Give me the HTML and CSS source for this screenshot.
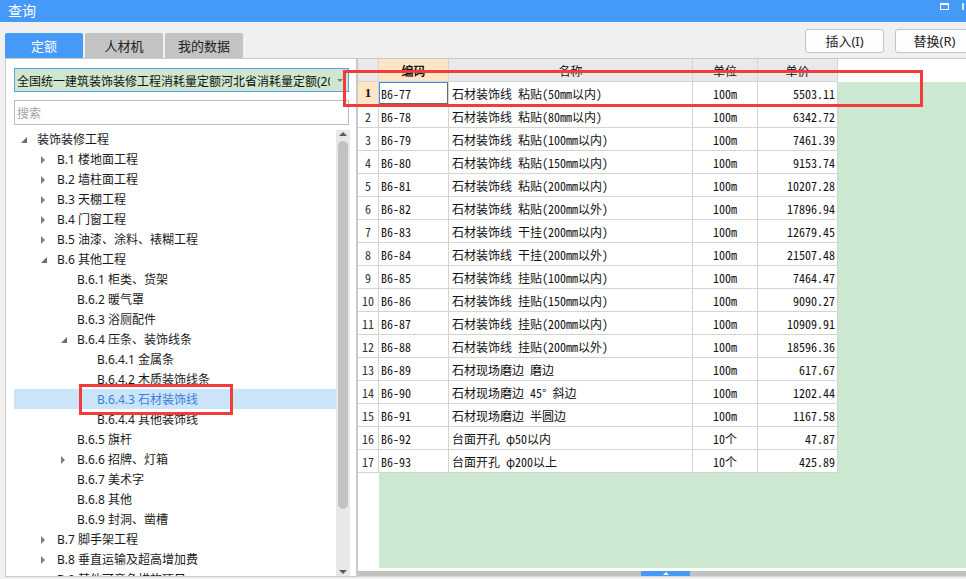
FILE: index.html
```html
<!DOCTYPE html>
<html lang="zh-CN">
<head>
<meta charset="utf-8">
<title>查询</title>
<link rel="stylesheet" href="styles.css">
</head>
<body>
<div class="app">
  <div class="titlebar">
    <span class="title">查询</span>
    <span class="win-max"></span>
    <span class="win-close"></span>
  </div>
  <div class="main">
    <div class="left">
      <div class="tabs">
        <div class="tab active">定额</div>
        <div class="tab">人材机</div>
        <div class="tab">我的数据</div>
      </div>
      <div class="panel">
        <div class="select">
          <span class="select-text">全国统一建筑装饰装修工程消耗量定额河北省消耗量定额(2012)</span>
          <span class="caret"></span>
        </div>
        <div class="search"><span class="placeholder">搜索</span></div>
        <div class="tree-wrap">
          <div class="tree">
            <div class="node l0"><span class="tg"><svg class="ex" width="6" height="6" viewBox="0 0 6 6"><polygon points="6,0 6,6 0,6"/></svg></span><span class="lbl">装饰装修工程</span></div>
            <div class="node l1"><span class="tg"><svg class="co" width="5" height="8" viewBox="0 0 5 8"><polygon points="0,0 4,4 0,8"/></svg></span><span class="lbl">B.1 楼地面工程</span></div>
            <div class="node l1"><span class="tg"><svg class="co" width="5" height="8" viewBox="0 0 5 8"><polygon points="0,0 4,4 0,8"/></svg></span><span class="lbl">B.2 墙柱面工程</span></div>
            <div class="node l1"><span class="tg"><svg class="co" width="5" height="8" viewBox="0 0 5 8"><polygon points="0,0 4,4 0,8"/></svg></span><span class="lbl">B.3 天棚工程</span></div>
            <div class="node l1"><span class="tg"><svg class="co" width="5" height="8" viewBox="0 0 5 8"><polygon points="0,0 4,4 0,8"/></svg></span><span class="lbl">B.4 门窗工程</span></div>
            <div class="node l1"><span class="tg"><svg class="co" width="5" height="8" viewBox="0 0 5 8"><polygon points="0,0 4,4 0,8"/></svg></span><span class="lbl">B.5 油漆、涂料、裱糊工程</span></div>
            <div class="node l1"><span class="tg"><svg class="ex" width="6" height="6" viewBox="0 0 6 6"><polygon points="6,0 6,6 0,6"/></svg></span><span class="lbl">B.6 其他工程</span></div>
            <div class="node l2"><span class="tg"></span><span class="lbl">B.6.1 柜类、货架</span></div>
            <div class="node l2"><span class="tg"></span><span class="lbl">B.6.2 暖气罩</span></div>
            <div class="node l2"><span class="tg"></span><span class="lbl">B.6.3 浴厕配件</span></div>
            <div class="node l2"><span class="tg"><svg class="ex" width="6" height="6" viewBox="0 0 6 6"><polygon points="6,0 6,6 0,6"/></svg></span><span class="lbl">B.6.4 压条、装饰线条</span></div>
            <div class="node l3"><span class="tg"></span><span class="lbl">B.6.4.1 金属条</span></div>
            <div class="node l3"><span class="tg"></span><span class="lbl">B.6.4.2 木质装饰线条</span></div>
            <div class="node l3 selected"><span class="tg"></span><span class="lbl">B.6.4.3 石材装饰线</span></div>
            <div class="node l3"><span class="tg"></span><span class="lbl">B.6.4.4 其他装饰线</span></div>
            <div class="node l2"><span class="tg"></span><span class="lbl">B.6.5 旗杆</span></div>
            <div class="node l2"><span class="tg"><svg class="co" width="5" height="8" viewBox="0 0 5 8"><polygon points="0,0 4,4 0,8"/></svg></span><span class="lbl">B.6.6 招牌、灯箱</span></div>
            <div class="node l2"><span class="tg"></span><span class="lbl">B.6.7 美术字</span></div>
            <div class="node l2"><span class="tg"></span><span class="lbl">B.6.8 其他</span></div>
            <div class="node l2"><span class="tg"></span><span class="lbl">B.6.9 封洞、凿槽</span></div>
            <div class="node l1"><span class="tg"><svg class="co" width="5" height="8" viewBox="0 0 5 8"><polygon points="0,0 4,4 0,8"/></svg></span><span class="lbl">B.7 脚手架工程</span></div>
            <div class="node l1"><span class="tg"><svg class="co" width="5" height="8" viewBox="0 0 5 8"><polygon points="0,0 4,4 0,8"/></svg></span><span class="lbl">B.8 垂直运输及超高增加费</span></div>
            <div class="node l1"><span class="tg"><svg class="co" width="5" height="8" viewBox="0 0 5 8"><polygon points="0,0 4,4 0,8"/></svg></span><span class="lbl">B.9 其他可竞争措施项目</span></div>
          </div>
          <div class="vscroll">
            <span class="arrow-up"></span>
            <span class="thumb"></span>
            <span class="arrow-down"></span>
          </div>
        </div>
      </div>
    </div>
    <div class="right">
      <div class="toolbar">
        <button class="btn">插入(I)</button>
        <button class="btn">替换(R)</button>
      </div>
      <div class="sheet">
        <div class="grid">
          <div class="c h corner"></div><div class="c h sel">编码</div><div class="c h">名称</div><div class="c h">单位</div><div class="c h">单价</div><div class="c eh"></div>

          <div class="c rn sel">1</div><div class="c code focus">B6-77</div><div class="c name">石材装饰线 粘贴(50mm以内)</div><div class="c unit">100m</div><div class="c price">5503.11</div><div class="c e"></div>
          <div class="c rn">2</div><div class="c code">B6-78</div><div class="c name">石材装饰线 粘贴(80mm以内)</div><div class="c unit">100m</div><div class="c price">6342.72</div><div class="c e"></div>
          <div class="c rn">3</div><div class="c code">B6-79</div><div class="c name">石材装饰线 粘贴(100mm以内)</div><div class="c unit">100m</div><div class="c price">7461.39</div><div class="c e"></div>
          <div class="c rn">4</div><div class="c code">B6-80</div><div class="c name">石材装饰线 粘贴(150mm以内)</div><div class="c unit">100m</div><div class="c price">9153.74</div><div class="c e"></div>
          <div class="c rn">5</div><div class="c code">B6-81</div><div class="c name">石材装饰线 粘贴(200mm以内)</div><div class="c unit">100m</div><div class="c price">10207.28</div><div class="c e"></div>
          <div class="c rn">6</div><div class="c code">B6-82</div><div class="c name">石材装饰线 粘贴(200mm以外)</div><div class="c unit">100m</div><div class="c price">17896.94</div><div class="c e"></div>
          <div class="c rn">7</div><div class="c code">B6-83</div><div class="c name">石材装饰线 干挂(200mm以内)</div><div class="c unit">100m</div><div class="c price">12679.45</div><div class="c e"></div>
          <div class="c rn">8</div><div class="c code">B6-84</div><div class="c name">石材装饰线 干挂(200mm以外)</div><div class="c unit">100m</div><div class="c price">21507.48</div><div class="c e"></div>
          <div class="c rn">9</div><div class="c code">B6-85</div><div class="c name">石材装饰线 挂贴(100mm以内)</div><div class="c unit">100m</div><div class="c price">7464.47</div><div class="c e"></div>
          <div class="c rn">10</div><div class="c code">B6-86</div><div class="c name">石材装饰线 挂贴(150mm以内)</div><div class="c unit">100m</div><div class="c price">9090.27</div><div class="c e"></div>
          <div class="c rn">11</div><div class="c code">B6-87</div><div class="c name">石材装饰线 挂贴(200mm以内)</div><div class="c unit">100m</div><div class="c price">10909.91</div><div class="c e"></div>
          <div class="c rn">12</div><div class="c code">B6-88</div><div class="c name">石材装饰线 挂贴(200mm以外)</div><div class="c unit">100m</div><div class="c price">18596.36</div><div class="c e"></div>
          <div class="c rn">13</div><div class="c code">B6-89</div><div class="c name">石材现场磨边 磨边</div><div class="c unit">100m</div><div class="c price">617.67</div><div class="c e"></div>
          <div class="c rn">14</div><div class="c code">B6-90</div><div class="c name">石材现场磨边 45° 斜边</div><div class="c unit">100m</div><div class="c price">1202.44</div><div class="c e"></div>
          <div class="c rn">15</div><div class="c code">B6-91</div><div class="c name">石材现场磨边 半圆边</div><div class="c unit">100m</div><div class="c price">1167.58</div><div class="c e"></div>
          <div class="c rn">16</div><div class="c code">B6-92</div><div class="c name">台面开孔 φ50以内</div><div class="c unit">10个</div><div class="c price">47.87</div><div class="c e"></div>
          <div class="c rn">17</div><div class="c code">B6-93</div><div class="c name">台面开孔 φ200以上</div><div class="c unit">10个</div><div class="c price">425.89</div><div class="c e"></div>
        </div>
        <div class="fill"><div class="fill-gutter"></div><div class="fill-green"></div></div>
        <div class="hscroll"><span class="hthumb"><span class="hthumb-arrow"></span></span></div>
      </div>
    </div>
  </div>
  <div class="mark mark-tree"></div>
  <div class="mark mark-row"></div>
</div>
</body>
</html>
```

FILE: styles.css
```css
* { box-sizing: border-box; }

html, body {
  margin: 0;
  padding: 0;
}

body {
  width: 966px;
  height: 579px;
  overflow: hidden;
  background: #f0f0f0;
  font-family: "Noto Sans", "Noto Sans CJK SC", sans-serif;
  font-size: 12px;
  color: #1a1a1a;
}

.app {
  position: relative;
  width: 966px;
  height: 579px;
  overflow: hidden;
}

/* title bar */
.titlebar {
  height: 22px;
  background: #4599f7;
  color: #fff;
  display: flex;
  align-items: flex-start;
  padding-left: 8px;
}

.title {
  font-size: 14px;
  line-height: 21px;
}

.win-max {
  margin-left: auto;
  margin-top: 3px;
  width: 9px;
  height: 7px;
  border: 1px solid #fff;
  border-top-width: 2px;
}

.win-close {
  margin-left: 13px;
  margin-top: 3px;
  width: 2px;
  height: 7px;
  background: #fff;
  opacity: 0.8;
  margin-right: 2px;
}

/* layout */
.main {
  display: flex;
  height: 557px;
}

.left {
  width: 357px;
  padding-left: 5px;
  display: flex;
  flex-direction: column;
}

.tabs {
  display: flex;
  gap: 2px;
  margin-top: 11px;
  height: 25px;
}

.tab {
  width: 78px;
  background: #c3c3c3;
  border-radius: 2px 2px 0 0;
  display: flex;
  align-items: center;
  justify-content: center;
  font-size: 13px;
  color: #222;
}

.tab.active {
  background: #4599f7;
  color: #fff;
}

.panel {
  height: 519px;
  border: 1px solid #c9c9c9;
  background: #fff;
  padding: 9px 6px 0 8px;
  display: flex;
  flex-direction: column;
}

.select {
  height: 24px;
  margin-right: 1px;
  border: 1px solid #5c9fe9;
  background: #cde8cf;
  display: flex;
  align-items: center;
  padding-left: 2px;
}

.select-text {
  width: 313px;
  overflow: hidden;
  white-space: nowrap;
  font-size: 12px;
  color: #111;
  padding-top: 1px;
}

.caret {
  margin-left: auto;
  margin-right: 5px;
  width: 0;
  height: 0;
  border-left: 3px solid transparent;
  border-right: 3px solid transparent;
  border-top: 3px solid #808080;
}

.search {
  height: 25px;
  margin-top: 8px;
  margin-right: 1px;
  border: 1px solid #bdbdbd;
  padding-left: 2px;
  display: flex;
  align-items: center;
}

.placeholder {
  color: #a3a3a3;
  font-size: 12px;
  padding-top: 1px;
}

.tree-wrap {
  margin-top: 4px;
  flex: 1;
  display: flex;
  overflow: hidden;
}

.tree {
  flex: 1;
  overflow: hidden;
}

.node {
  height: 20px;
  display: flex;
  align-items: center;
  white-space: nowrap;
}

.node.l1 { padding-left: 20px; }
.node.l2 { padding-left: 40px; }
.node.l3 { padding-left: 60px; }

.tg {
  width: 23px;
  flex: none;
  display: flex;
  align-items: center;
  padding-left: 7px;
}

.tg svg { display: block; }
.tg .ex { fill: #6c6c6c; margin-top: 2px; }
.tg .co { fill: #7d7d7d; margin-top: 1px; }

.lbl {
  font-size: 12px;
  line-height: 20px;
  padding-top: 2px;
  color: #1a1a1a;
}

.node.selected {
  background: #cce4f7;
}

.node.selected .lbl {
  color: #3a80e0;
}

.vscroll {
  width: 14px;
  flex: none;
  margin-top: 1px;
  background: #e8e8e8;
  display: flex;
  flex-direction: column;
  align-items: center;
}

.arrow-up {
  margin-top: 2px;
  width: 0;
  height: 0;
  border-left: 4px solid transparent;
  border-right: 4px solid transparent;
  border-bottom: 4px solid #5a5a5a;
}

.thumb {
  margin-top: 5px;
  width: 10px;
  height: 368px;
  border-radius: 5px;
  background: #c2c2c2;
}

.arrow-down {
  margin-top: auto;
  margin-bottom: 2px;
  width: 0;
  height: 0;
  border-left: 4px solid transparent;
  border-right: 4px solid transparent;
  border-top: 4px solid #5a5a5a;
}

/* right side */
.right {
  flex: 1;
  min-width: 0;
  display: flex;
  flex-direction: column;
}

.toolbar {
  height: 36px;
  padding-top: 7px;
  display: flex;
  justify-content: flex-end;
  gap: 11px;
  margin-right: -8px;
}

.btn {
  width: 79px;
  height: 24px;
  padding: 0;
  background: #fdfdfd;
  border: 1px solid #c3c3c3;
  border-radius: 3px;
  font-family: "Noto Sans", "Noto Sans CJK SC", sans-serif;
  font-size: 13px;
  line-height: 22px;
  color: #222;
}

.sheet {
  height: 519px;
  border-top: 1px solid #c9c9c9;
  border-left: 1px solid #c9c9c9;
  border-bottom: 1px solid #d6d6d6;
  background: #fff;
  display: flex;
  flex-direction: column;
}

.grid {
  display: grid;
  grid-template-columns: 21px 70px 244px 65px 80px 1fr;
  grid-auto-rows: 23px;
}

.c {
  border-right: 1px solid #d4d4d4;
  border-bottom: 1px solid #d4d4d4;
  display: flex;
  align-items: center;
  white-space: nowrap;
  overflow: hidden;
  padding: 0 2px;
  font-family: "Noto Sans Mono CJK SC", "Liberation Mono", "Noto Sans CJK SC", monospace;
  font-size: 12px;
  color: #111;
}

.c.h {
  background: #e9e9e9;
  justify-content: center;
  font-family: "Noto Sans CJK SC", sans-serif;
}

.c.h.sel {
  background: #fde5c6;
  font-weight: bold;
}

.c.rn {
  justify-content: center;
  padding: 0;
  color: #333;
}

.c.rn.sel {
  background: #fde5c6;
  font-weight: bold;
  font-family: "Liberation Serif", serif;
  font-size: 13px;
  color: #111;
}

.c.code.focus {
  box-shadow: inset 1px 1px 0 #3d8ee8, inset -1px -1px 0 #6a6a6a;
}

.c.name { padding-left: 3px; }

.c.unit { justify-content: center; }

.c.price {
  justify-content: flex-end;
  padding-right: 2px;
}

.c.eh {
  border: none;
  background: #fff;
}

.c.e {
  border: none;
  background: #cde8d0;
}

.fill {
  height: 95px;
  display: flex;
}

.fill-gutter {
  width: 21px;
  flex: none;
}

.fill-green {
  flex: 1;
  background: #cde8d0;
}

.hscroll {
  height: 5px;
  margin-top: 3px;
  background: #c2c2c2;
  display: flex;
}

.hthumb {
  margin-left: 283px;
  width: 49px;
  height: 5px;
  background: #4599f7;
  display: flex;
  justify-content: center;
  align-items: center;
}

.hthumb-arrow {
  width: 0;
  height: 0;
  border-left: 3px solid transparent;
  border-right: 3px solid transparent;
  border-bottom: 3px solid #fff;
}

/* red annotation boxes */
.mark {
  position: absolute;
  border: 3px solid #f23c3c;
  pointer-events: none;
}

.mark-tree {
  left: 79px;
  top: 384px;
  width: 154px;
  height: 31px;
}

.mark-row {
  left: 343px;
  top: 70px;
  width: 580px;
  height: 37px;
}
```
